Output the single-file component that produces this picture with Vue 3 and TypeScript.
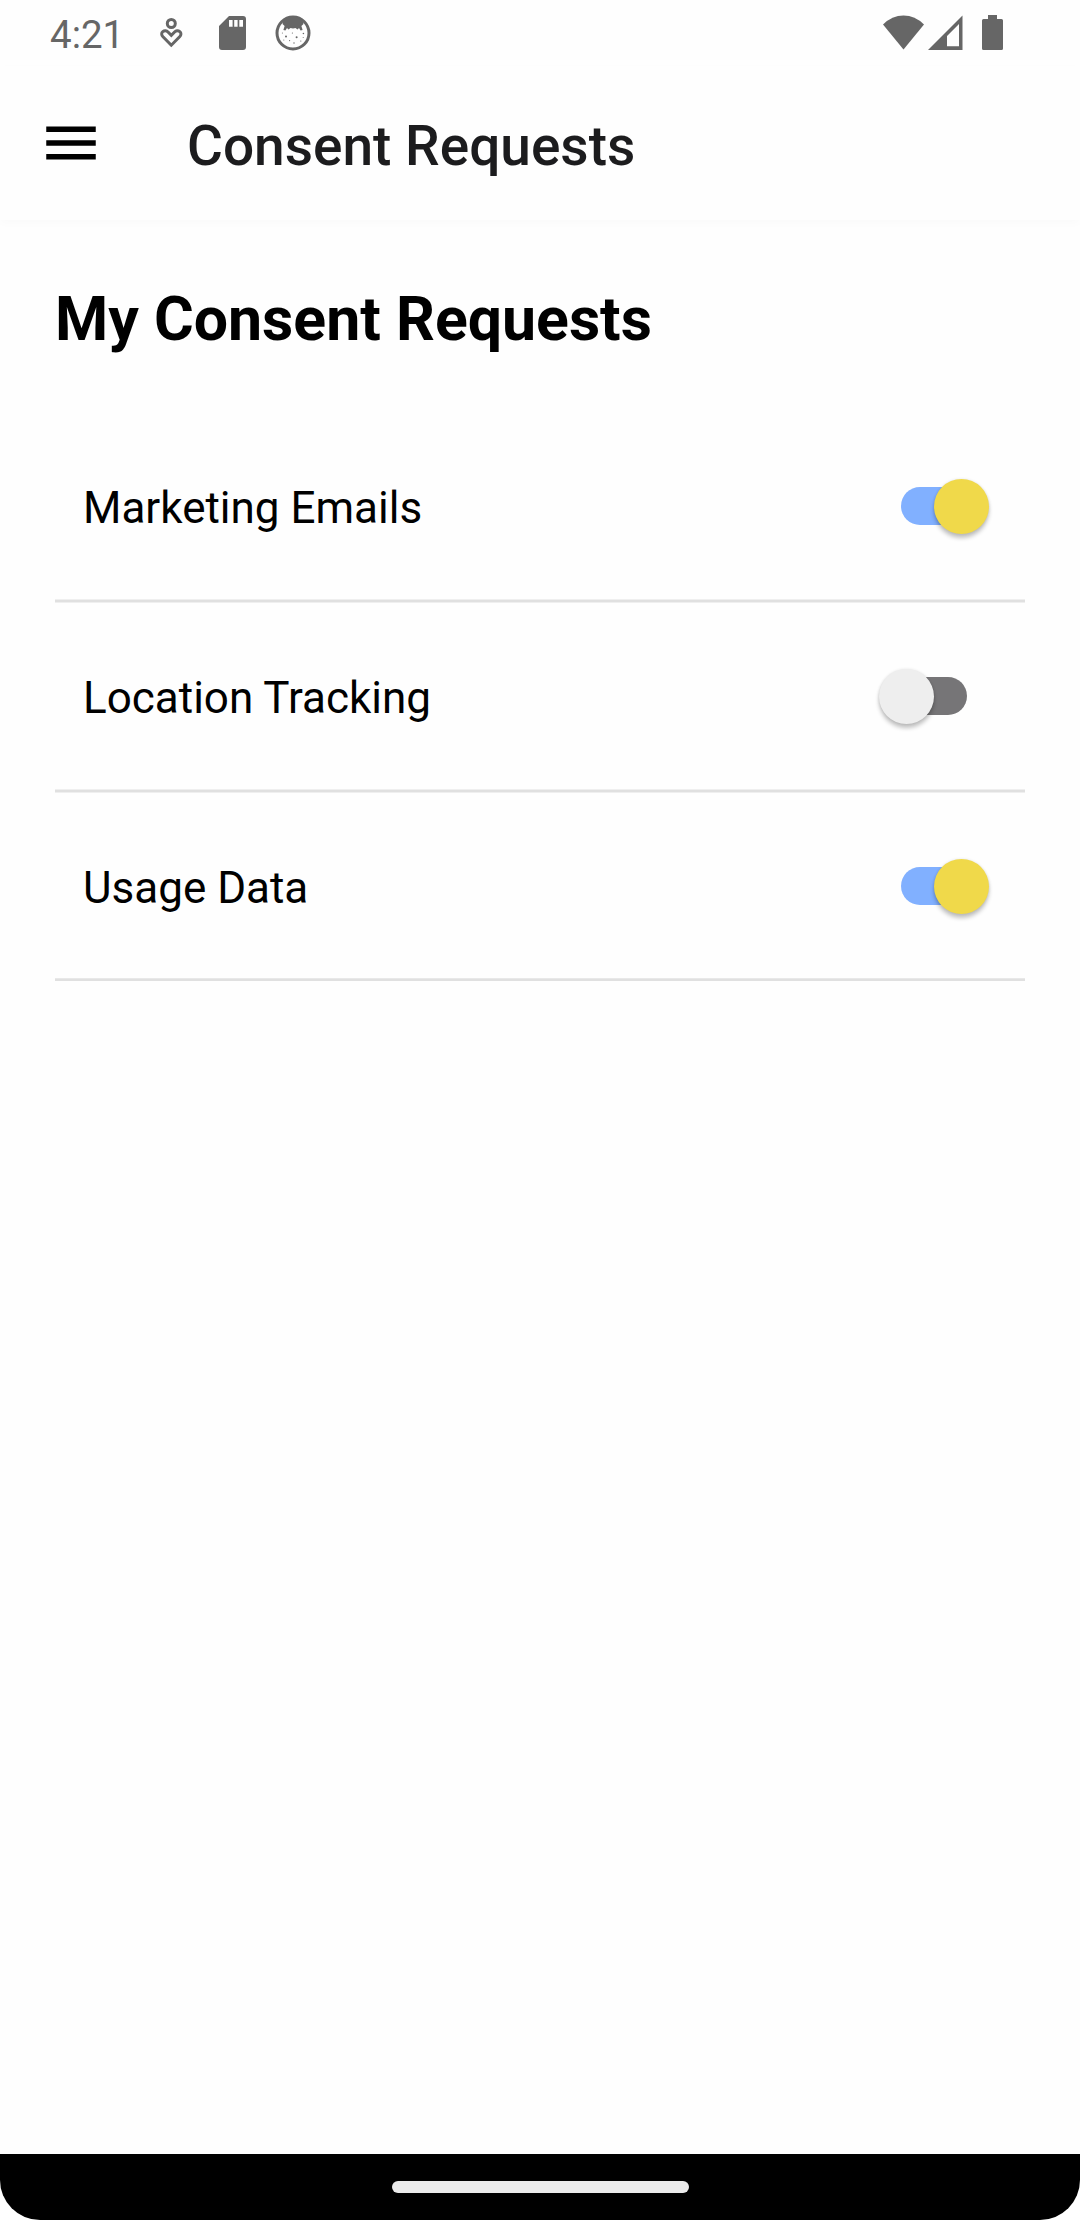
<script setup lang="ts">
import { ref } from 'vue'

interface Consent {
  id: string
  label: string
  granted: boolean
}

const consents = ref<Consent[]>([
  { id: 'marketing', label: 'Marketing Emails', granted: true },
  { id: 'location', label: 'Location Tracking', granted: false },
  { id: 'usage', label: 'Usage Data', granted: true },
])

function toggle(item: Consent): void {
  item.granted = !item.granted
}
</script>

<template>
  <div class="screen">
    <div class="status-bar">
      <span class="clock">4:21</span>
      <svg class="icon-person" width="24" height="32" viewBox="0 0 24 32" fill="none" stroke="#666" stroke-width="3">
        <circle cx="12.3" cy="6.5" r="4" />
        <path d="M12.3 28.2 L4 19.8 C2.2 17.8 2.3 15.8 3.8 14.6 C5.5 13.2 7.7 13.6 9 15 L12.3 18.4 L15.6 15 C16.9 13.6 19.1 13.2 20.8 14.6 C22.3 15.8 22.4 17.8 20.6 19.8 Z" />
      </svg>
      <svg class="icon-sd" width="27" height="34" viewBox="0 0 27 34" fill="#666">
        <path fill-rule="evenodd" d="M10 0H24Q27 0 27 3V31Q27 34 24 34H3Q0 34 0 31V10ZM10 4V10.7H13.6V4ZM15.2 4V10.7H18.6V4ZM20.3 4V10.7H24V4Z" />
      </svg>
      <svg class="icon-cat" width="36" height="36" viewBox="0 0 36 36">
        <circle cx="18" cy="18" r="16" fill="none" stroke="#666" stroke-width="3" />
        <path d="M8 7 Q12 2 18 2 Q24 2 28 7 L28.5 9 L26.4 11 L27.6 15 L25.6 15.6 L24 13 L22.5 14.5 L20.5 13 L18 13.6 L15.5 13 L13.5 14.5 L12 13 L10.4 15.6 L8.4 15 L9.6 11 L7.5 9Z" fill="#666" />
        <g fill="#666">
          <circle cx="11" cy="21.5" r="1" />
          <circle cx="21.6" cy="22.3" r="1" />
          <circle cx="17.4" cy="18" r=".6" />
          <circle cx="28.4" cy="18.5" r=".8" />
          <circle cx="7.4" cy="18" r=".5" />
          <circle cx="8.8" cy="25" r=".5" />
          <circle cx="14.6" cy="25.6" r=".6" />
          <circle cx="19" cy="28" r=".7" />
          <circle cx="25.8" cy="26" r=".6" />
          <circle cx="28.2" cy="22.4" r=".5" />
        </g>
      </svg>
      <svg class="icon-wifi" width="41" height="35" viewBox="0 0 41 35" fill="#666">
        <path d="M0 9.4 Q9 .4 20.5 .4 Q32 .4 41 9.4 L20.5 34.5Z" />
      </svg>
      <svg class="icon-signal" width="35" height="35" viewBox="0 0 35 35" fill="#666">
        <path fill-rule="evenodd" d="M34.5 .5V35H0ZM31 9L19 21V31.2H31Z" />
      </svg>
      <svg class="icon-battery" width="21" height="35" viewBox="0 0 21 35" fill="#666">
        <path d="M6 0H15V4H19.5Q21 4 21 5.5V33.5Q21 35 19.5 35H1.5Q0 35 0 33.5V5.5Q0 4 1.5 4H6Z" />
      </svg>
    </div>

    <header class="app-bar">
      <button class="menu" aria-label="Open menu">
        <svg width="66" height="66" viewBox="0 0 24 24">
          <path d="M3 18h18v-2H3v2zm0-5h18v-2H3v2zm0-7v2h18V6H3z" />
        </svg>
      </button>
      <h1 class="title">Consent Requests</h1>
    </header>

    <main class="content">
      <h2 class="heading">My Consent Requests</h2>
      <ul class="list">
        <li v-for="item in consents" :key="item.id" class="row">
          <span class="label">{{ item.label }}</span>
          <button
            class="switch"
            :class="{ on: item.granted }"
            role="switch"
            :aria-checked="item.granted"
            :aria-label="item.label"
            @click="toggle(item)"
          >
            <span class="track"></span>
            <span class="thumb"></span>
          </button>
        </li>
      </ul>
    </main>

    <div class="nav-bar"><span class="pill"></span></div>
  </div>
</template>

<style>
body {
  margin: 0;
  background: #fff;
}
</style>

<style scoped>
.screen {
  display: flex;
  flex-direction: column;
  width: 1080px;
  height: 2220px;
  overflow: hidden;
  font-family: Roboto, sans-serif;
  color: #000;
  background: #fff;
}

button {
  padding: 0;
  border: 0;
  background: none;
}

svg {
  display: block;
}

.status-bar {
  display: flex;
  flex: none;
  align-items: flex-start;
  box-sizing: border-box;
  height: 66px;
  padding: 15px 77px 0 50px;
  background: #fefefe;
}

.clock {
  width: 109px;
  font-size: 38.5px;
  line-height: 40px;
  color: #666;
}

.icon-person {
  margin-top: 2px;
}

.icon-sd {
  margin: 1px 0 0 36px;
}

.icon-cat {
  margin: 0 0 0 29px;
}

.icon-wifi {
  margin-left: auto;
}

.icon-signal {
  margin-left: 4px;
}

.icon-battery {
  margin-left: 19px;
}

.app-bar {
  z-index: 1;
  display: flex;
  flex: none;
  align-items: center;
  box-sizing: border-box;
  height: 154px;
  padding-left: 38px;
  background: #fefefe;
  box-shadow: 0 3px 9px rgba(0, 0, 0, 0.018);
}

.title {
  margin: 6px 0 0 83px;
  font-size: 55px;
  font-weight: 500;
  line-height: 66px;
  color: #1c1c1e;
}

.content {
  flex: 1;
  box-sizing: border-box;
  padding: 64px 55px 0;
  background: #fefefe;
}

.heading {
  margin: 0;
  font-size: 60.8px;
  font-weight: 700;
  line-height: 72px;
}

.list {
  margin: 56px 0 0;
  padding: 0;
  list-style: none;
}

.row {
  display: flex;
  align-items: center;
  justify-content: space-between;
  box-sizing: border-box;
  height: 190px;
  padding: 0 36px 0 28px;
  border-bottom: 2px solid #e0e0e0;
  box-shadow: 0 1px #efefef, inset 0 -1px #efefef;
}

.row:last-child {
  height: 189px;
  padding-top: 1px;
  box-shadow: inset 0 -1px #e8e8e8;
}

.label {
  margin-top: 4px;
  font-size: 44px;
  line-height: 54px;
}

.switch {
  display: flex;
  align-items: center;
  width: 110px;
  height: 55px;
}

.track {
  width: 66px;
  height: 38px;
  margin-left: 22px;
  border-radius: 19px;
  background: #767577;
}

.thumb {
  width: 55px;
  height: 55px;
  margin-left: -88px;
  border-radius: 50%;
  background: #eee;
  box-shadow: 0 4px 4px rgba(0, 0, 0, 0.24), 0 0 3px rgba(0, 0, 0, 0.1);
}

.switch.on .track {
  background: #81b0ff;
}

.switch.on .thumb {
  margin-left: -33px;
  background: #f0d94a;
}

.nav-bar {
  display: flex;
  flex: none;
  justify-content: center;
  box-sizing: border-box;
  height: 66px;
  padding-top: 27px;
  border-radius: 0 0 40px 40px;
  background: #000;
}

.pill {
  width: 297px;
  height: 12px;
  border-radius: 6px;
  background: #ebebeb;
}
</style>
